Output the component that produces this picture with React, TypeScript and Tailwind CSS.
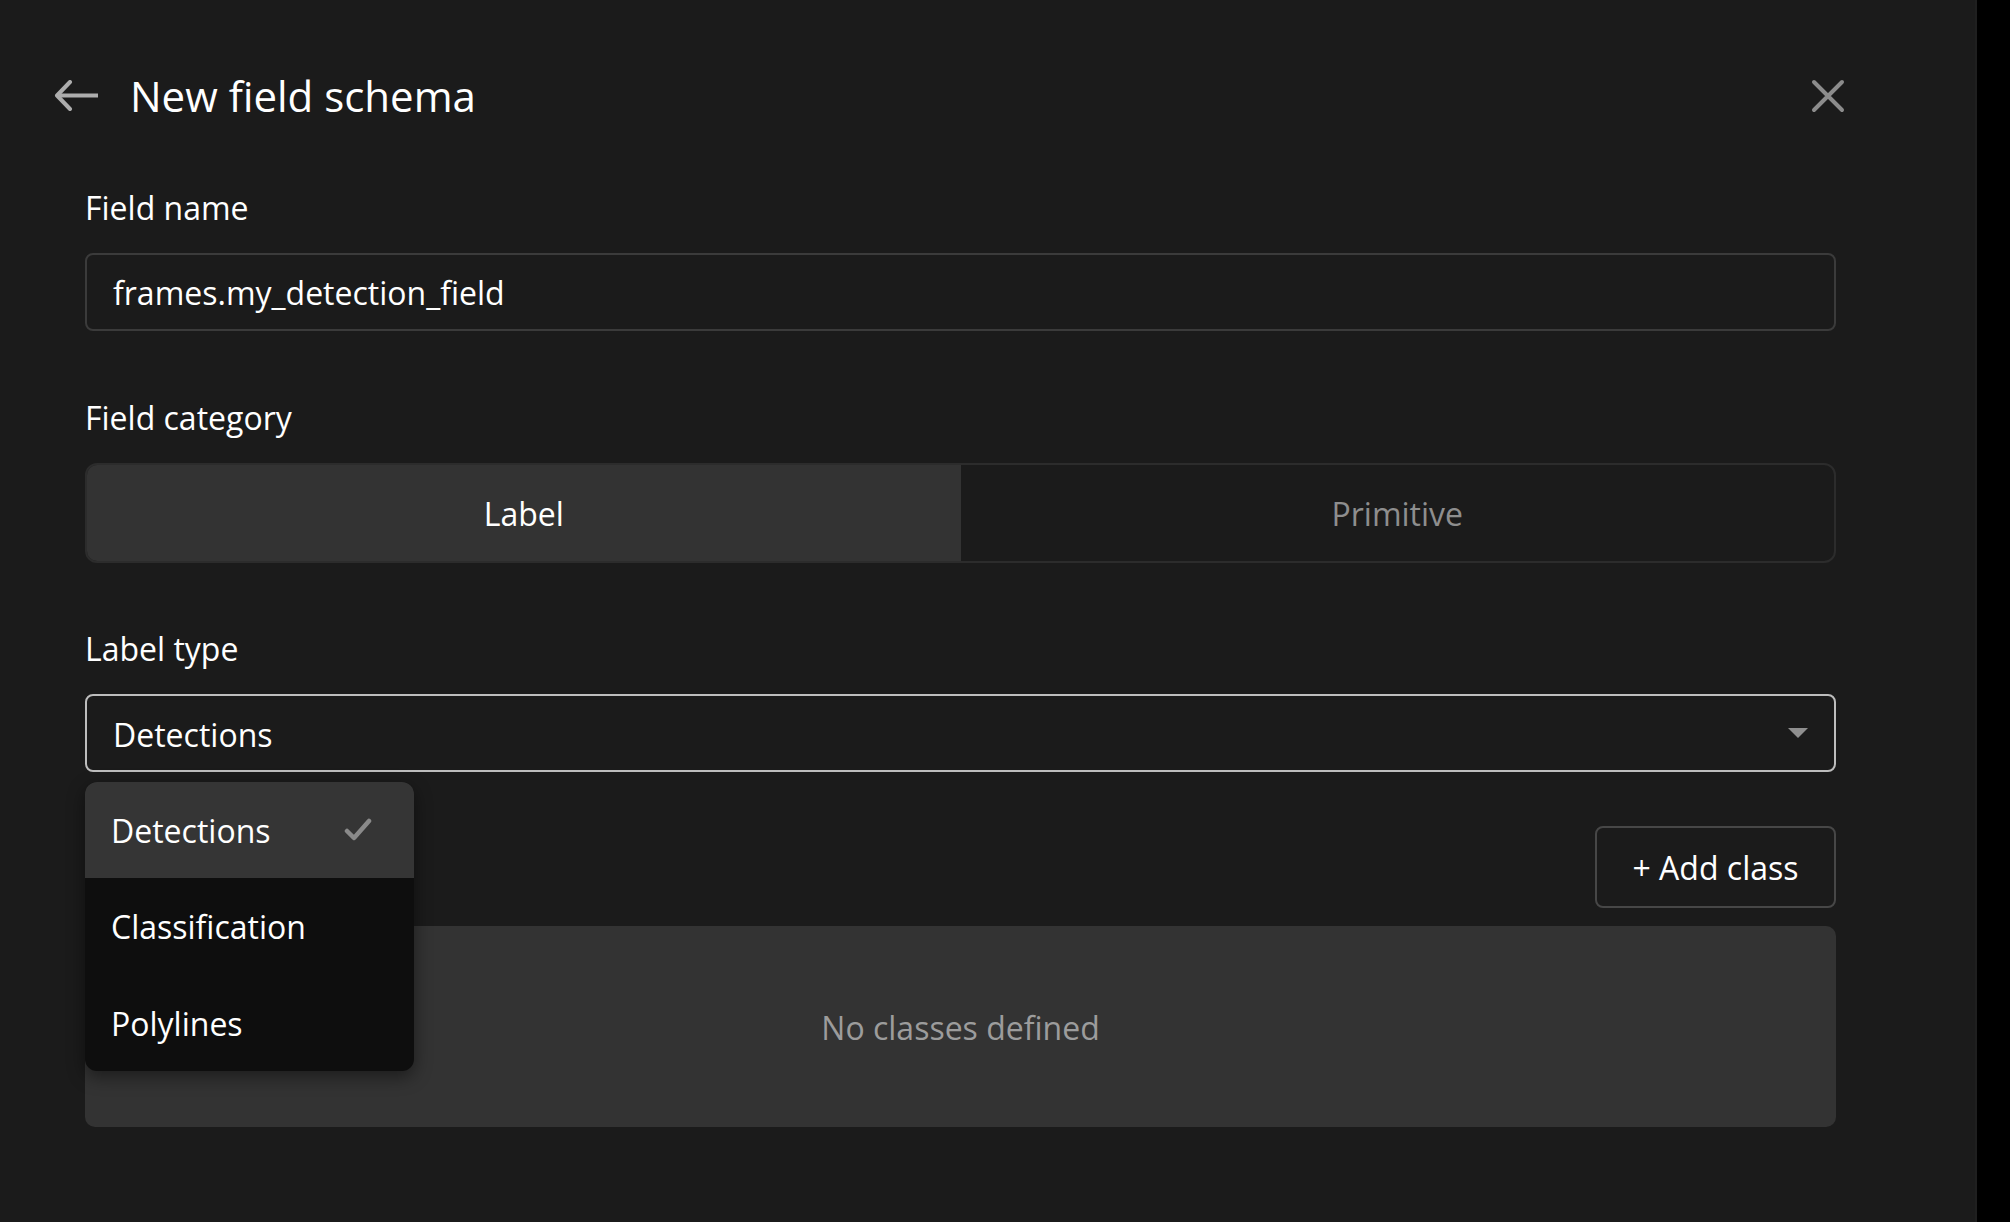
import React from "react";

const font = { fontFamily: '"Open Sans", "Noto Sans", sans-serif' };

function BackArrow() {
  return (
    <svg width="46" height="32" viewBox="0 0 46 32" fill="none">
      <path d="M44 15.5H3" stroke="#adadad" strokeWidth="4" />
      <path d="M16 2L3 15.5L16 29" stroke="#adadad" strokeWidth="4" strokeLinecap="round" strokeLinejoin="round" />
    </svg>
  );
}

function CloseX() {
  return (
    <svg width="34" height="34" viewBox="0 0 34 34" fill="none">
      <path d="M3 3L31 31M31 3L3 31" stroke="#8c8c8c" strokeWidth="4" strokeLinecap="round" />
    </svg>
  );
}

function Caret() {
  return (
    <svg width="20" height="10" viewBox="0 0 20 10">
      <path d="M0 0H20L10 10Z" fill="#8f8f8f" />
    </svg>
  );
}

function Check() {
  return (
    <svg width="28" height="24" viewBox="0 0 28 24" fill="none">
      <path d="M3 13L10 20L25 3" stroke="#8a8a8a" strokeWidth="4.5" strokeLinecap="round" strokeLinejoin="round" />
    </svg>
  );
}

export default function App() {
  return (
    <div className="w-full h-[1222px] bg-black flex overflow-hidden" style={font}>
      <div className="w-[1977px] h-full bg-[#1b1b1b] border-r-2 border-[#1f1f1f] flex flex-col">
        {/* Header */}
        <div className="mt-[65px] h-[62px] flex items-center pl-[54px] pr-[130px]">
          <BackArrow />
          <div className="ml-[30px] text-[42px] leading-[62px] text-white">New field schema</div>
          <div className="ml-auto">
            <CloseX />
          </div>
        </div>

        {/* Form */}
        <div className="ml-[85px] w-[1751px] flex flex-col">
          <div className="mt-[59px] text-[32px] leading-[44px] text-white">Field name</div>
          <div className="mt-[23px] h-[78px] rounded-[8px] border-2 border-[#3b3b3b] flex items-center pl-[26px] pt-[2px] text-[32px] text-white">
            frames.my_detection_field
          </div>

          <div className="mt-[65px] text-[32px] leading-[44px] text-white">Field category</div>
          <div className="mt-[23px] h-[100px] rounded-[12px] border-2 border-[#2c2c2c] flex overflow-hidden">
            <div className="flex-1 bg-[#333333] flex items-center justify-center pt-[2px] text-[32px] text-white">Label</div>
            <div className="flex-1 flex items-center justify-center pt-[2px] text-[32px] text-[#8e8e8e]">Primitive</div>
          </div>

          <div className="mt-[64px] text-[32px] leading-[44px] text-white">Label type</div>
          <div className="relative mt-[23px]">
            <div className="h-[78px] rounded-[8px] border-2 border-[#bdbdbd] flex items-center pl-[26px] pr-[26px] text-[32px] text-white">
              <span className="pt-[3px]">Detections</span>
              <span className="ml-auto flex items-center">
                <Caret />
              </span>
            </div>

            {/* Dropdown menu */}
            <div className="absolute left-0 top-[88px] z-10 w-[329px] rounded-[12px] bg-[#0e0e0e] overflow-hidden shadow-[0_6px_18px_rgba(0,0,0,0.45)]">
              <div className="h-[96px] bg-[#353535] flex items-center pl-[26px] pr-[42px] text-[32px] text-white">
                <span className="pt-[2px]">Detections</span>
                <span className="ml-auto flex items-center">
                  <Check />
                </span>
              </div>
              <div className="h-[96px] flex items-center pl-[26px] pt-[2px] text-[32px] text-white">Classification</div>
              <div className="h-[97px] flex items-center pl-[26px] pt-[2px] text-[32px] text-white">Polylines</div>
            </div>
          </div>

          <div className="mt-[54px] flex items-center">
            <div className="ml-auto h-[82px] w-[241px] rounded-[8px] border-2 border-[#474747] flex items-center justify-center pt-[2px] text-[32px] text-white">
              + Add class
            </div>
          </div>

          <div className="mt-[18px] h-[201px] rounded-[10px] bg-[#333333] flex items-center justify-center pt-[2px] text-[32px] text-[#9c9c9c]">
            No classes defined
          </div>
        </div>
      </div>
    </div>
  );
}
